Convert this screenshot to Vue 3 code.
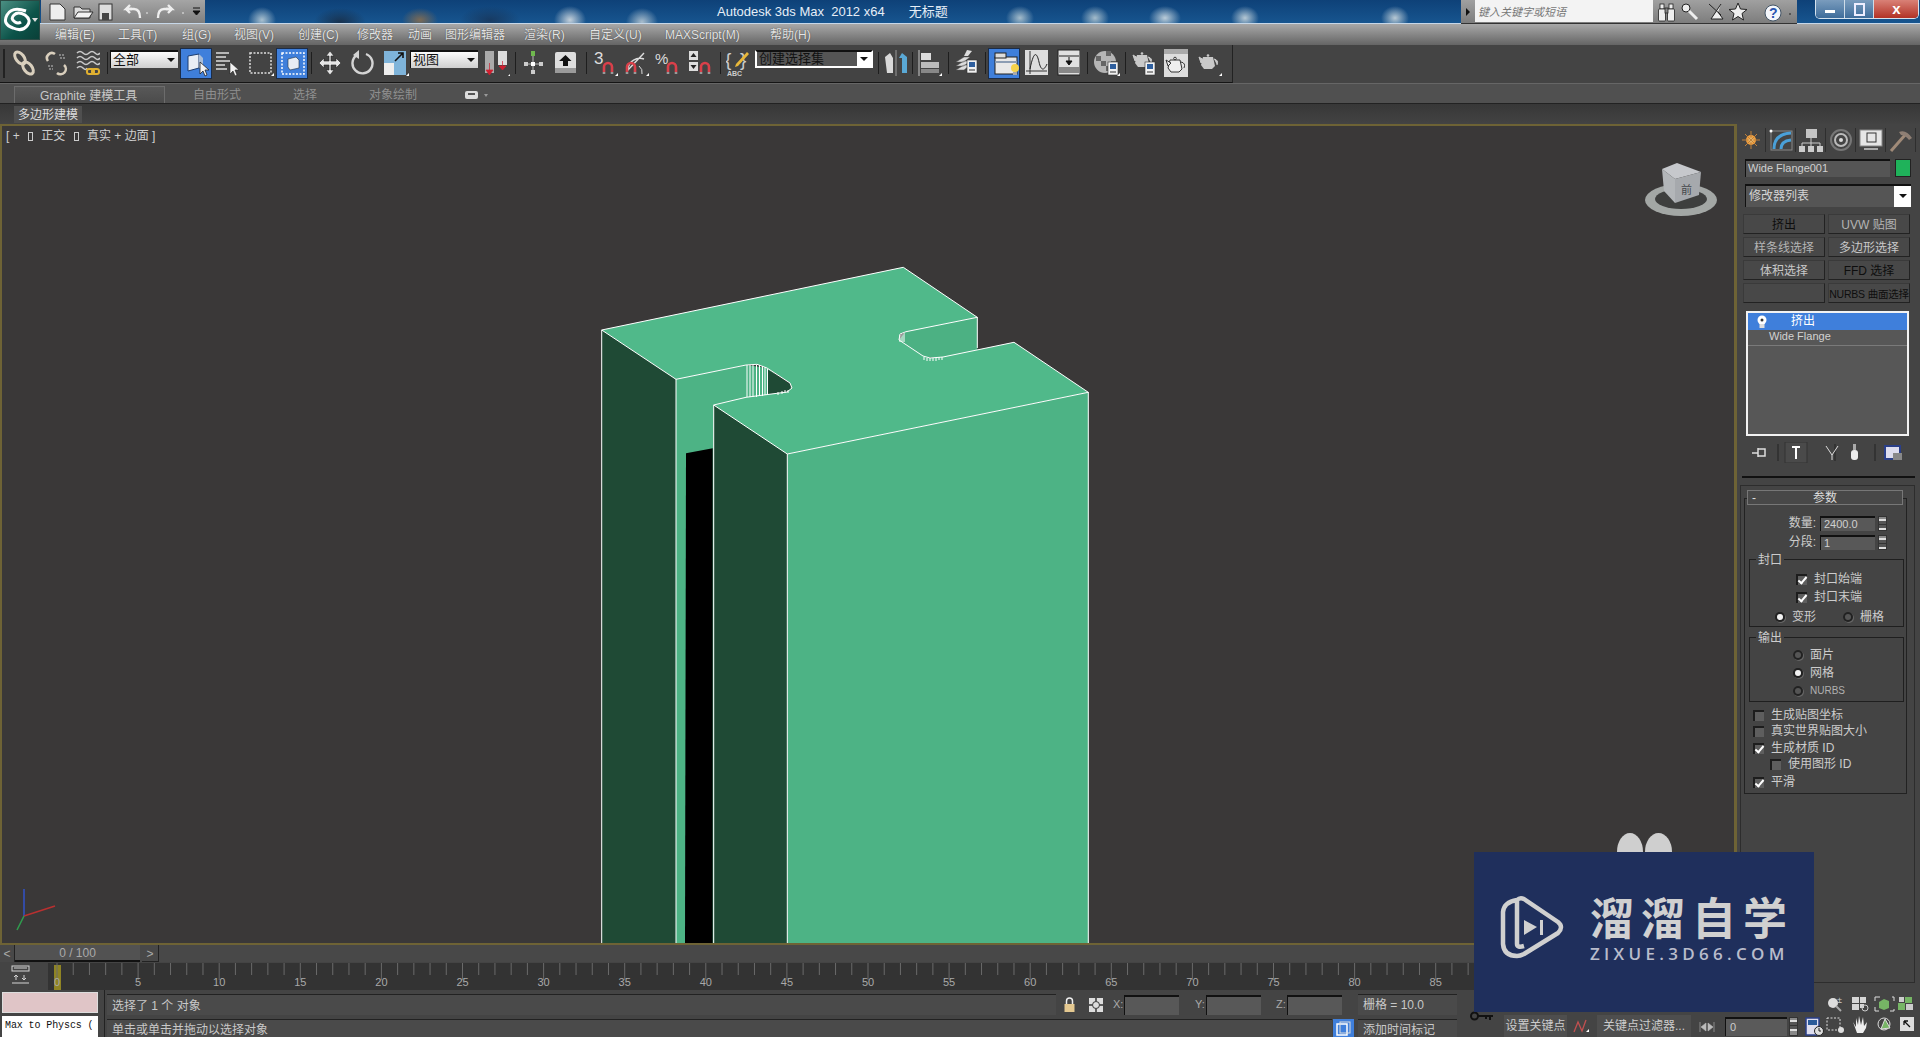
<script setup>
const fly = (x = 22, y = 25) => `<path d="M${x} ${y + 3}l3-3v3z" fill="#fff"/>`
const magnet = (x, y) => `<path d="M${x} ${y + 9}v-5a4 4 0 0 1 8 0v5" fill="none" stroke="#d9404a" stroke-width="2.6"/><path d="M${x - 1.3} ${y + 9}h2.6v2h-2.6zM${x + 6.7} ${y + 9}h2.6v2h-2.6z" fill="#9a9a9a"/>`
const mini = (x, y) => `<rect x="${x}" y="${y}" width="10" height="13" fill="#f2f2f2" stroke="#333" stroke-width=".6"/><rect x="${x + 2}" y="${y + 2}" width="6" height="5" fill="#2f5f9e"/><path d="M${x + 2} ${y + 10}h6" stroke="#333"/>`
const teapot = (x, y, c = '#c9c9c9') => `<path d="M${x + 4} ${y + 3}h10l2 9-3 3h-8l-3-4z" fill="${c}"/><path d="M${x + 5} ${y + 6}l-5-3 2 6zM${x + 15} ${y + 5}q5 1 3 6" fill="${c}" stroke="${c}"/><circle cx="${x + 9}" cy="${y + 1.5}" r="1.3" fill="${c}"/>`

const ic = {
  link: `<g fill="none" stroke="#d9cfbd" stroke-width="3"><ellipse cx="8" cy="9" rx="4" ry="7" transform="rotate(-38 8 9)"/><ellipse cx="16" cy="19" rx="4" ry="7" transform="rotate(-38 16 19)"/></g>`,
  unlink: `<g fill="none" stroke="#d9cfbd" stroke-width="2.6"><path d="M4 12a5 5 0 0 1 7-7"/><path d="M20 16a5 5 0 0 1-7 8"/></g><path d="M15 6h5M16 9h5M4 17h5M5 20h4" stroke="#999" stroke-width="1.6" stroke-dasharray="2 1"/>`,
  bind: `<g fill="none" stroke="#c9c9c9" stroke-width="1.6"><path d="M1 4q3-3 6 0t6 0 6 0 5 0M1 9q3-3 6 0t6 0 6 0 5 0M1 14q3-3 6 0t6 0 6 0 5 0M1 19q3-3 6 0t4 0"/></g><g fill="none" stroke="#e0b030" stroke-width="2"><rect x="11" y="20" width="7" height="5" rx="2"/><rect x="16" y="20" width="7" height="5" rx="2"/></g>`,
  sel: `<path d="M5 7l11-2v14l-11 3z" fill="#e9eef5" stroke="#1c3d70"/><path d="M16 5l4 4v10h-4z" fill="#a9bdd8"/><path d="M17 13v12l3-3 2 5 2-1-2-5h4z" fill="#f4f4f4" stroke="#222" stroke-width=".8"/>`,
  byname: `<path d="M1 4h13M1 8h10M1 12h14M1 16h9M1 20h11" stroke="#ddd" stroke-width="1.6"/><path d="M15 13v12l3-3 2 5 2-1-2-5h4z" fill="#f2f2f2" stroke="#222" stroke-width=".6"/>`,
  rect: `<rect x="2" y="4" width="21" height="20" fill="none" stroke="#e0e0e0" stroke-width="1.5" stroke-dasharray="2 1.5"/>${fly(23, 24)}`,
  win: `<rect x="3" y="4" width="22" height="21" fill="none" stroke="#fff" stroke-width="1.5" stroke-dasharray="2 1.5"/><path d="M9 10l8-2 3 3v8l-9 2-2-3z" fill="#e8edf4" stroke="#234" stroke-width=".6"/>`,
  move: `<path d="M12 2l4 5h-3v5h5v-3l5 5-5 5v-3h-5v5h3l-4 5-4-5h3v-5H6v3l-5-5 5-5v3h5V7H8z" fill="#e6e6e6" stroke="#222" stroke-width=".6"/>`,
  rotate: `<path d="M7 6a10 10 0 1 0 9-1" fill="none" stroke="#d4d4d4" stroke-width="2.4"/><path d="M9 1v9l-6-4z" fill="#d4d4d4"/>`,
  scale: `<rect x="1" y="2" width="22" height="24" fill="#7fb4da"/><rect x="1" y="14" width="10" height="12" fill="#eee"/><path d="M12 12l8-8M15 4h5v5" fill="none" stroke="#111" stroke-width="1.6"/>${fly(23, 24)}`,
  pivot: `<rect x="1" y="2" width="9" height="22" fill="#aaa"/><rect x="14" y="2" width="9" height="14" fill="#ddd"/><path d="M5.500 14v11M2 21l3.500 5 3.500-5zM18.500 12v8M15 17l3.500 4 3.500-4z" fill="#d02030" stroke="#d02030" stroke-width=".7"/>${fly(24, 24)}`,
  manip: `<path d="M11 6v18M2 15h19" stroke="#bbb"/><rect x="9" y="2" width="4" height="5" fill="#6fb84e"/><rect x="2" y="13" width="4" height="4" fill="#ccc"/><rect x="17" y="13" width="4" height="4" fill="#ccc"/><rect x="9" y="21" width="4" height="4" fill="#ccc"/><rect x="9" y="13" width="4" height="4" fill="#fff"/>`,
  key: `<rect x="1" y="3" width="21" height="21" rx="2" fill="#dedede"/><rect x="1" y="19" width="21" height="5" fill="#9a9a9a"/><path d="M11.500 6l6 6h-3.500v5h-5v-5H5z" fill="#111"/>`,
  snap3: `<text x="1" y="15" font-size="17" fill="#ddd" font-family="Liberation Sans">3</text>${magnet(11, 14)}${fly(22, 24)}`,
  snapa: `<path d="M4 20A12 12 0 0 1 20 10M3 22L20 4" fill="none" stroke="#ddd" stroke-width="1.4"/>${magnet(3, 14)}<path d="M15 17a8 8 0 0 1 3 8" fill="none" stroke="#ddd"/>${fly(22, 24)}`,
  snapp: `<text x="0" y="15" font-size="15" fill="#ddd" font-family="Liberation Sans">%</text>${magnet(13, 14)}`,
  snaps: `<rect x="1" y="2" width="9" height="9" fill="#ddd"/><rect x="1" y="13" width="9" height="9" fill="#ddd"/><path d="M5.500 4l3 4h-6zM5.500 20l3-4h-6z" fill="#222"/>${magnet(13, 14)}`,
  sets: `<text x="-1" y="17" font-size="19" fill="#ccc" font-family="Liberation Sans">{</text><text x="14" y="17" font-size="19" fill="#ccc" font-family="Liberation Sans">}</text><path d="M10 15L21 3l2 2-11 12-3 1z" fill="#e9b83a"/><text x="1" y="27" font-size="7" font-weight="700" fill="#ccc" font-family="Liberation Sans">ABC</text>`,
  mirror: `<path d="M1 8l5-4 3 5v15H3z" fill="#d9d9d9"/><path d="M12 1v26" stroke="#999"/><path d="M23 8l-5-4-3 5h3v15h5z" fill="#5aa9d6"/>`,
  align: `<path d="M1 1v26" stroke="#ccc"/><rect x="3" y="4" width="10" height="7" fill="#ddd"/><rect x="3" y="13" width="18" height="6" fill="#bbb"/><rect x="3" y="20" width="18" height="4" fill="#888"/>${fly(21, 24)}`,
  layers: `<path d="M2 13l8-5h6l-6 5zM2 17l8-5h6l-6 5zM2 21l8-5h6l-6 5z" fill="#ddd" stroke="#555" stroke-width=".5"/><path d="M13 1l5 1-4 5h-4z" fill="#ddd"/>${mini(13, 11)}`,
  graph: `<rect x="4" y="8" width="22" height="17" fill="#e8e8e8" stroke="#222"/><rect x="4" y="4" width="11" height="5" fill="#ddd" stroke="#222"/><rect x="4" y="12" width="22" height="2" fill="#8c9db3"/><circle cx="24" cy="19" r="4" fill="#f5d24a"/><rect x="22" y="23" width="4" height="3" fill="#aaa"/>`,
  curve: `<rect x="1" y="1" width="23" height="25" fill="#ddd"/><path d="M6 2v23M2 22h21" stroke="#333"/><path d="M6 20C10 0 13 4 15 13s5 9 8 2" fill="none" stroke="#222"/>`,
  schem: `<rect x="1" y="1" width="22" height="25" fill="#e0e0e0" stroke="#222"/><path d="M2 7h20" stroke="#222"/><rect x="2" y="18" width="20" height="6" fill="#888"/><path d="M12 8v7M9 12l3 4 3-4z" stroke="#111" fill="#111"/>`,
  mat: `<circle cx="11" cy="13" r="11" fill="#b5b5b5"/><path d="M2 7h5v5H2zM12 2h5v5h-5zM7 12h5v5H7zM17 12h5v5h-5zM12 17h5v5h-5z" fill="#666"/>${mini(14, 13)}${fly(23, 24)}`,
  rset: `${teapot(1, 3)}${mini(13, 13)}`,
  rfr: `<rect x="0" y="0" width="24" height="28" fill="#ddd"/><rect x="0" y="0" width="24" height="5" fill="#aaa"/>${teapot(2, 8, '#eee').replace(/fill="#eee"/g, 'fill="#eee" stroke="#333"')}`,
  rend: `${teapot(2, 5)}${fly(22, 24)}`,
  sun: `<circle cx="13" cy="12" r="5" fill="#f0a040"/><circle cx="13" cy="12" r="2.500" fill="#ffe9a0"/><path d="M13 3v18M4 12h18M7 6l12 12M19 6L7 18" stroke="#c0803a" stroke-width="1"/>`,
  bend: `<rect x="3" y="3" width="21" height="19" fill="none" stroke="#888"/><path d="M6 21q0-15 17-16M13 21q0-8 10-9" fill="none" stroke="#4aa0d8" stroke-width="3"/><circle cx="3" cy="3" r="1.500" fill="#fff"/>`,
  hier: `<rect x="8" y="1" width="11" height="9" fill="#c4c4c4"/><path d="M13 10v5M4 15h18M4 15v3M13 15v3M22 15v3" stroke="#ccc"/><rect x="1" y="18" width="6" height="6" fill="#ccc"/><rect x="10" y="18" width="6" height="6" fill="#ccc"/><rect x="19" y="18" width="6" height="6" fill="#ccc"/>`,
  motion: `<circle cx="13" cy="12" r="10" fill="none" stroke="#777" stroke-width="2"/><circle cx="13" cy="12" r="6" fill="none" stroke="#bbb" stroke-width="2"/><circle cx="13" cy="12" r="2" fill="#ddd"/>`,
  display: `<rect x="2" y="2" width="22" height="16" fill="#e6e6e6" stroke="#888"/><rect x="9" y="5" width="9" height="9" fill="none" stroke="#333"/><path d="M6 21h14" stroke="#aaa" stroke-width="2"/>`,
  hammer: `<path d="M3 23L17 7" stroke="#a08a78" stroke-width="3"/><path d="M11 4q7-3 13 6l-3 2q-4-5-8-5z" fill="#8f7f74"/>`
}

let cursor = 0
const tb = [
  { x: 12, w: 24, s: ic.link }, { x: 44, w: 24, s: ic.unlink }, { x: 76, w: 24, s: ic.bind }, { x: 107, sep: 1 },
  { x: 110, w: 68, sel: '全部' }, { x: 181, w: 30, s: ic.sel, on: 1 }, { x: 215, w: 26, s: ic.byname }, { x: 248, w: 26, s: ic.rect },
  { x: 277, w: 30, s: ic.win, on: 1 }, { x: 311, sep: 1 }, { x: 318, w: 24, s: ic.move }, { x: 350, w: 24, s: ic.rotate },
  { x: 383, w: 26, s: ic.scale }, { x: 410, w: 68, sel: '视图' }, { x: 484, w: 26, s: ic.pivot }, { x: 515, sep: 1 },
  { x: 522, w: 23, s: ic.manip }, { x: 554, w: 23, s: ic.key }, { x: 586, sep: 1 }, { x: 593, w: 25, s: ic.snap3 },
  { x: 624, w: 25, s: ic.snapa }, { x: 655, w: 25, s: ic.snapp }, { x: 688, w: 24, s: ic.snaps }, { x: 720, sep: 1 },
  { x: 726, w: 24, s: ic.sets }, { x: 755, w: 118, sel: '创建选择集', dark: 1 }, { x: 878, sep: 1 }, { x: 884, w: 24, s: ic.mirror },
  { x: 912, sep: 1 }, { x: 918, w: 24, s: ic.align }, { x: 948, sep: 1 }, { x: 954, w: 24, s: ic.layers }, { x: 985, sep: 1 },
  { x: 989, w: 30, s: ic.graph, on: 1 }, { x: 1024, w: 24, s: ic.curve }, { x: 1057, w: 23, s: ic.schem }, { x: 1087, sep: 1 },
  { x: 1094, w: 26, s: ic.mat }, { x: 1125, sep: 1 }, { x: 1132, w: 24, s: ic.rset }, { x: 1164, w: 24, s: ic.rfr }, { x: 1197, w: 25, s: ic.rend }
].map((it) => {
  const m = it.x - cursor
  cursor = it.x + (it.sep ? 1 : it.w)
  return { ...it, ml: m }
})

const menus = [
  ['编辑(E)', 'E', 55], ['工具(T)', 'T', 118], ['组(G)', 'G', 182], ['视图(V)', 'V', 234], ['创建(C)', 'C', 298], ['修改器', '', 357], ['动画', '', 408],
  ['图形编辑器', '', 445], ['渲染(R)', 'R', 524], ['自定义(U)', 'U', 589], ['MAXScript(M)', 'M', 665], ['帮助(H)', 'H', 770]
].map((m, i, a) => ({ label: m[0], w: (i < a.length - 1 ? a[i + 1][2] : m[2] + 50) - m[2] }))

const tabs = [ic.sun, ic.bend, ic.hier, ic.motion, ic.display, ic.hammer]
const mods = [
  { t: '挤出', c: 'dim' }, { t: 'UVW 贴图', c: 'mid' }, { t: '样条线选择', c: 'mid' }, { t: '多边形选择', c: '' },
  { t: '体积选择', c: '' }, { t: 'FFD 选择', c: 'dim' }, { t: '', c: '' }, { t: 'NURBS 曲面选择', c: 'dim tight' }
]
const ticks = Array.from({ length: 88 }, (_, i) => ({ x: 57 + i * 16.22, i }))
</script>

<template>
  <div class="app">
    <header class="title">
      <div class="quick">
        <svg class="qi" width="160" height="24" viewBox="0 0 160 24">
          <path d="M9 4h10l5 5v11H9z" fill="#eee" stroke="#333"/>
          <path d="M33 7h6l2 2h8v9H33z" fill="#ddd" stroke="#333"/><path d="M33 18l4-6h15l-4 6z" fill="#f2f2f2" stroke="#333"/>
          <rect x="58" y="4" width="13" height="16" fill="#ddd" stroke="#333"/><rect x="61" y="13" width="7" height="7" fill="#444"/>
          <path d="M91 9h-6l4-4M85 9l4 4" fill="none" stroke="#eee" stroke-width="2.400"/><path d="M85 9h8q6 0 6 9" fill="none" stroke="#eee" stroke-width="2.400"/>
          <circle cx="106" cy="13" r="1" fill="#ccc"/>
          <path d="M125 9h6l-4-4M131 9l-4 4" fill="none" stroke="#eee" stroke-width="2.400"/><path d="M131 9h-8q-6 0-6 9" fill="none" stroke="#eee" stroke-width="2.400"/>
          <circle cx="142" cy="13" r="1" fill="#ccc"/>
          <path d="M152 8h7M152 11h7l-3.500 4z" stroke="#111" fill="#111"/>
        </svg>
      </div>
      <div class="caption"><span>Autodesk 3ds Max&nbsp; 2012 x64</span><span class="cap-doc">无标题</span></div>
      <div class="info">
        <span class="info-arrow"></span>
        <span class="search">键入关键字或短语</span>
        <svg width="144" height="24" viewBox="1653 0 144 24">
          <g fill="#eee" stroke="#222" stroke-width=".8"><rect x="1660" y="4" width="4" height="5"/><rect x="1669" y="4" width="4" height="5"/><rect x="1658.500" y="9" width="7" height="12" rx="1"/><rect x="1667.500" y="9" width="7" height="12" rx="1"/><rect x="1665" y="8" width="3" height="5" fill="#888"/></g>
          <circle cx="1686" cy="8" r="4" fill="#eee" stroke="#222"/><path d="M1689 11l8 8" stroke="#eee" stroke-width="3"/>
          <path d="M1709 4l12 11M1721 4l-10 15h12l-5-7" fill="#eee" stroke="#222"/>
          <path d="M1738 3l2.500 6 6.500.5-5 4 1.500 6.500-5.500-3.500-5.500 3.500 1.500-6.500-5-4 6.500-.5z" fill="#eee" stroke="#222"/>
          <circle cx="1773" cy="13" r="8" fill="#f4f6fb" stroke="#456"/><text x="1769" y="18" font-size="14" font-weight="700" fill="#2a55b0" font-family="Liberation Sans">?</text>
          <circle cx="1790" cy="14" r="1" fill="#444"/>
        </svg>
      </div>
      <div class="winbtns">
        <span class="wb"><i class="w-min"></i></span><span class="wb"><i class="w-max"></i></span><span class="wb close">x</span>
      </div>
    </header>
    <div class="logo">
      <svg width="30" height="30" viewBox="0 0 30 30"><path d="M24 6Q10 1 5 10t6 13q9 4 14-2t-2-11q-7-4-11 0t1 7q3 2 6 0" fill="none" stroke="#fff" stroke-width="3"/></svg>
      <i class="logo-arrow"></i>
    </div>

    <nav class="menu">
      <span v-for="m in menus" :key="m.label" class="menu-item" :style="{ width: m.w + 'px' }">{{ m.label }}</span>
    </nav>

    <div class="toolbar">
      <i class="grip"></i>
      <template v-for="(it, i) in tb" :key="i">
        <i v-if="it.sep" class="tsep" :style="{ marginLeft: it.ml + 'px' }"></i>
        <span v-else-if="it.sel" class="dd" :class="{ dark: it.dark }" :style="{ marginLeft: it.ml + 'px', width: it.w + 'px' }">
          <b class="dd-text">{{ it.sel }}</b><i class="dd-arrow"></i>
        </span>
        <span v-else class="tbtn" :class="{ on: it.on }" :style="{ marginLeft: it.ml + 'px', width: it.w + 'px' }">
          <svg :width="it.w" height="28" :viewBox="`${it.on ? -2 : 0} 0 ${it.w} 28`" v-html="it.s"></svg>
        </span>
      </template>
    </div>

    <div class="rib-tabs">
      <span class="rib-active">Graphite 建模工具</span>
      <span class="rib-t t1">自由形式</span><span class="rib-t t2">选择</span><span class="rib-t t3">对象绘制</span>
      <svg class="rib-ic" width="24" height="10" viewBox="0 0 24 10"><rect x="0" y="1" width="13" height="8" rx="2" fill="#ddd"/><rect x="3" y="3" width="7" height="2" fill="#555"/><path d="M19 4h4l-2 3z" fill="#999"/></svg>
    </div>
    <div class="rib-panel"><span class="rib-chip">多边形建模</span></div>

    <main class="work">
      <div class="left">
        <section class="viewport">
          <div class="vp-label">[ + <i class="box"></i> 正交 <i class="box"></i> 真实 + 边面 ]</div>
          <svg class="scene" width="1738" height="821" viewBox="0 124 1738 821">
            <polygon points="676,379 746,365 746,398 714,405 714,945 676,945" fill="#4db385"/>
            <polygon points="686,453.300 712.700,448.300 712.700,945 685,945" fill="#000"/>
            <polygon points="601.700,330 676,379.300 676,945 601.700,945" fill="#1f4a35"/>
            <polygon points="713.700,405 787.300,454 787.300,945 713.700,945" fill="#1f4a35"/>
            <polygon points="787.300,454 1088.300,392.300 1088.300,945 787.300,945" fill="#4db385"/>
            <polygon points="906,331 977.300,317.300 977.300,350 943,358 923,357 899,340" fill="#4cb183"/>
            <polygon points="746,365 767,368 792,388 787,393 746,398" fill="#4db385"/>
            <polygon points="767,369 790,384 791,389 787,392 767,395" fill="#1f4a35"/>
            <polygon points="601.700,330 903.300,267.300 977.300,317.300 906,331.700 900,334 899,340 923,356 930,358 943,357 1014,342.300 1088.300,392.300 787.300,454 713.700,405 746,397.300 787,392 792,388 790,383 767,368 757,364.300 746,365 676,379.300" fill="#50b98a" stroke="#fff" stroke-width="1" stroke-linejoin="round"/>
            <g stroke="#fff" stroke-width="1">
              <path d="M601.700 330V945M676 379V945M713.700 405V945M787.300 454V945M1088.300 392V945M977.300 317V348"/>
              <path d="M747 365v32M750 365v32M753 365v32M756.500 365v32M759.500 365v31M762.500 366v30M765 367v28M767.500 369v26"/>
              <path d="M778 392v3M782 391v3M785 390v3M788 390v3"/>
              <path d="M900 335v7M902 334v8M904 333v9M924 357v3M927 358v3M930 358v3M933 358v3M936 358v3M939 357v3M942 357v3"/>
            </g>
            <g class="cube">
              <ellipse cx="1681" cy="200" rx="36" ry="16" fill="#a3a7a5"/>
              <ellipse cx="1681" cy="199" rx="26" ry="10" fill="#3e3f3e"/>
              <polygon points="1662,169 1677,163 1701,172 1675,179" fill="#c6c8cc"/>
              <polygon points="1675,179 1701,172 1699,195 1675,203" fill="#a6a9ad"/>
              <polygon points="1662,169 1675,179 1675,203 1664,191" fill="#b3b6b9"/>
              <text x="1681" y="194" font-size="11" fill="#45484c" font-family="Noto Sans CJK SC">前</text>
            </g>
            <g stroke-width="1.500">
              <path d="M24 916V889" stroke="#3252c8"/><path d="M24 916L55 906" stroke="#b83030"/><path d="M24 916L17 930" stroke="#2f9c4e"/>
            </g>
          </svg>
        </section>
        <div class="slider">
          <span class="sl-btn">&lt;</span><span class="sl-track">0 / 100</span><span class="sl-btn end">&gt;</span>
        </div>
        <div class="ruler">
          <svg width="1738" height="28" viewBox="0 0 1738 28">
            <rect x="48" y="1" width="1690" height="27" fill="#333"/>
            <g transform="translate(11 4)" fill="none" stroke="#d4d4d4"><rect x="1" y="0" width="17" height="5"/><path d="M3 2h13M5 9v5M3 11l2-2 2 2M13 9v5M11 12l2 2 2-2M1 17h17" /></g>
            <rect x="54" y="3" width="7" height="25" fill="#8f8424"/>
            <g v-for="t in ticks" :key="t.i">
              <line :x1="t.x" y1="1" :x2="t.x" :y2="t.i % 5 === 0 ? 18 : 13" stroke="#6a6a6a" stroke-width="1"/>
              <text v-if="t.i % 5 === 0" :x="t.x" y="24" text-anchor="middle" font-size="11" fill="#a9a9a9" font-family="Liberation Sans">{{ t.i }}</text>
            </g>
          </svg>
        </div>
      </div>

      <aside class="cmd">
        <div class="cmd-tabs">
          <span v-for="(t, i) in tabs" :key="i" class="cmd-tab"><svg width="26" height="24" viewBox="0 0 26 24" v-html="t"></svg></span>
        </div>
        <div class="name-row"><span class="name">Wide Flange001</span><i class="swatch"></i></div>
        <div class="modlist"><span class="modlist-t">修改器列表</span><i class="modlist-btn"></i></div>
        <div class="modgrid"><span v-for="(m, i) in mods" :key="i" class="modbtn" :class="m.c">{{ m.t }}</span></div>
        <div class="stack">
          <div class="stack-on">
            <svg width="12" height="14" viewBox="0 0 12 14"><circle cx="6" cy="5" r="4.500" fill="#fff"/><rect x="3.500" y="9" width="5" height="4" fill="#ddd"/><circle cx="6" cy="5" r="1.500" fill="#333"/></svg>
            <span>挤出</span>
          </div>
          <div class="stack-base">Wide Flange</div>
        </div>
        <div class="stack-tools">
          <svg width="164" height="21" viewBox="1750 442 164 21">
            <path d="M1752 453h6M1758 448v9M1758 449h7v7h-7" fill="none" stroke="#ddd" stroke-width="1.500"/>
            <path d="M1778 444v17M1875 444v17M1835 444v17" stroke="#222"/>
            <rect x="1785" y="442" width="22" height="21" fill="#4a4a4a" stroke="#333"/><path d="M1792 446h8v2h-3v11h-2v-11h-3z" fill="#fff"/>
            <path d="M1826 446l6 9 6-9M1832 455v5" fill="none" stroke="#ddd"/>
            <rect x="1851" y="450" width="7" height="10" rx="3" fill="#eee"/><path d="M1853 444h3v6h-3z" fill="#aaa"/>
            <rect x="1885" y="446" width="15" height="13" fill="#dde" stroke="#2a3f88" stroke-width="2"/><rect x="1893" y="453" width="9" height="7" fill="#888"/>
          </svg>
        </div>
        <i class="cmd-line"></i>
        <div class="rollbox">
          <div class="rollout">
            <div class="roll-head"><span class="roll-minus">-</span><span class="roll-title">参数</span></div>
            <div class="spin-row"><span class="spin-l">数量:</span><span class="spin-in">2400.0</span><i class="spin-b"></i></div>
            <div class="spin-row s2"><span class="spin-l">分段:</span><span class="spin-in">1</span><i class="spin-b"></i></div>

            <div class="group g1">
              <span class="legend">封口</span>
              <label class="chk c1"><i class="cb on"></i>封口始端</label>
              <label class="chk c2"><i class="cb on"></i>封口末端</label>
              <div class="radios">
                <label class="rad r1"><i class="rb on"></i>变形</label>
                <label class="rad r2"><i class="rb"></i>栅格</label>
              </div>
            </div>

            <div class="group g2">
              <span class="legend">输出</span>
              <label class="rad r3"><i class="rb"></i>面片</label>
              <label class="rad r3"><i class="rb on"></i>网格</label>
              <label class="rad r3 small"><i class="rb"></i>NURBS</label>
            </div>

            <div class="opts">
              <label class="chk o"><i class="cb"></i>生成贴图坐标</label>
              <label class="chk o"><i class="cb"></i>真实世界贴图大小</label>
              <label class="chk o tall"><i class="cb on"></i>生成材质 ID</label>
              <label class="chk o sub"><i class="cb"></i>使用图形 ID</label>
              <label class="chk o tall last"><i class="cb on"></i>平滑</label>
            </div>
          </div>
        </div>
      </aside>
    </main>

    <footer class="status">
      <div class="script"><i class="pink"></i><span class="mxs">Max to Physcs (</span></div>
      <div class="st-mid">
        <div class="st-row">
          <span class="st-box wide">选择了 1 个 对象</span>
          <svg class="lock" width="11" height="15" viewBox="0 0 11 15"><path d="M2.500 7V4a3 3 0 0 1 6 0v3" fill="none" stroke="#eee" stroke-width="1.500"/><rect x="0.500" y="7" width="10" height="8" fill="#e4c890"/></svg>
          <svg class="cross" width="14" height="14" viewBox="0 0 14 14"><rect width="14" height="14" fill="#ddd"/><circle cx="7" cy="7" r="3.500" fill="none" stroke="#333"/><path d="M7 0v3M7 11v3M0 7h3M11 7h3" stroke="#333" stroke-width="1.500"/></svg>
          <span class="xyz x">X:</span><i class="xyz-in"></i>
          <span class="xyz y">Y:</span><i class="xyz-in"></i>
          <span class="xyz z">Z:</span><i class="xyz-in"></i>
          <span class="st-box grid">栅格 = 10.0</span>
        </div>
        <div class="st-row two">
          <span class="st-box prompt">单击或单击并拖动以选择对象</span>
          <span class="blue-ic"><svg width="15" height="15" viewBox="0 0 15 15"><rect x="1" y="3" width="10" height="11" fill="none" stroke="#fff" stroke-width="1.500"/><rect x="4" y="1" width="10" height="11" fill="none" stroke="#ddd"/></svg></span>
          <span class="st-box time">添加时间标记</span>
        </div>
      </div>
      <div class="st-key"><svg width="24" height="10" viewBox="0 0 24 10"><circle cx="4.500" cy="5" r="3.500" fill="none" stroke="#111" stroke-width="2"/><path d="M8 4h15v2h-2v3h-2V6h-2v2h-2V6H8z" fill="#111"/></svg></div>
      <div class="st-anim">
        <i class="anim-white"></i>
        <div class="anim-row">
          <span class="anim-btn setkey">设置关键点</span>
          <svg class="curve-ic" width="17" height="16" viewBox="0 0 17 16"><path d="M1 14l4-10 4 9 4-11" fill="none" stroke="#c05050" stroke-width="1.300"/><path d="M13 14l3-3v3z" fill="#fff"/></svg>
          <span class="anim-btn filter">关键点过滤器...</span>
        </div>
      </div>
      <div class="st-play">
        <svg class="goto" width="16" height="10" viewBox="0 0 16 10"><path d="M1 0v10M15 0v10M7 1v8L2 5zM9 1v8l5-4z" fill="#bbb" stroke="#bbb" stroke-width=".6"/></svg>
        <span class="frame">0</span><i class="spin-b big"></i>
        <svg class="tc" width="19" height="19" viewBox="0 0 19 19"><rect x="1" y="1" width="13" height="17" fill="#dde" stroke="#2a3f88" stroke-width="1.500"/><rect x="3" y="3" width="9" height="5" fill="#2a5a9a"/><circle cx="14" cy="14" r="4.500" fill="#ddd" stroke="#222"/><path d="M14 11v3h2" stroke="#222" fill="none"/></svg>
      </div>
      <div class="st-nav">
        <svg width="92" height="41" viewBox="0 0 92 41">
          <circle cx="7" cy="7" r="5" fill="#ddd"/><path d="M10 10l5 5" stroke="#aaa" stroke-width="2"/><text x="11" y="7" font-size="9" fill="#ccc" font-family="Liberation Sans">±</text>
          <path d="M26 1h7v6h-7zM34 1h6v6h-6zM26 8h7v6h-7zM34 8h4v4h-4z" fill="#d6d6d6"/><circle cx="39" cy="12" r="3" fill="none" stroke="#ccc"/>
          <path d="M49 5V1h5M66 1h2v4M68 13v2h-4M49 11v4h4" fill="none" stroke="#ddd"/><path d="M53 6l5-3 5 2v7l-5 2-5-2z" fill="#76b565"/>
          <path d="M72 7h7v7h-7zM79 1h7v6h-7z" fill="#76b565"/><path d="M80 8h7v6h-7zM73 1h5v5h-5z" fill="#ccc"/>
          <rect x="1" y="22" width="13" height="12" fill="none" stroke="#ddd" stroke-dasharray="2 1.500"/><circle cx="15" cy="34" r="3" fill="#ddd"/>
          <path d="M27 26l3 5v-9l2 7 1-9 2 9 2-8 1 9 3-4-1 6-3 5h-6z" fill="#eee"/>
          <circle cx="58" cy="28" r="6" fill="none" stroke="#ddd"/><path d="M55 33l4-10 5 9z" fill="#76b565" stroke="#ddd"/>
          <rect x="74" y="21" width="14" height="14" fill="#ddd"/><path d="M78 25l6 6M78 25h4M78 25v4" stroke="#111" stroke-width="1.300"/>
        </svg>
      </div>
    </footer>

    <aside class="mark">
      <i class="ear e1"></i><i class="ear e2"></i>
      <svg width="66" height="68" viewBox="0 0 66 68"><path d="M17 6Q4 8 3 18V50Q4 62 17 62Q20 62 24 60L58 39Q64 33 58 28L24 5Q20 3 17 6V50Q17 54 24 52" fill="none" stroke="#d0d0d0" stroke-width="4.500" stroke-linejoin="round"/><path d="M24 26l13 7-13 8z" fill="#d0d0d0"/><rect x="40" y="26" width="3" height="15" fill="#d0d0d0"/></svg>
      <div class="mark-t"><b>溜溜自学</b><span>ZIXUE.3D66.COM</span></div>
    </aside>
  </div>
</template>

<style>
html, body { margin: 0; background: #444; overflow: hidden; }
</style>

<style scoped>
.app {
  position: relative;
  width: 1920px;
  height: 1037px;
  overflow: hidden;
  background: #444;
  color: #ccc;
  font: 12px/1.2 "Liberation Sans", "Noto Sans CJK SC", sans-serif;
}
i { display: block; font-style: normal; }

/* title */
.title {
  height: 24px;
  display: flex;
  box-sizing: border-box;
  border-bottom: 1px solid #c6d7e8;
  background:
    radial-gradient(ellipse 14px 13px at 262px 20px, #a9c0cf 0, transparent 100%),
    radial-gradient(ellipse 26px 14px at 340px 22px, #18324f 0, transparent 100%),
    radial-gradient(ellipse 18px 12px at 420px 20px, #7b6a55 0, transparent 100%),
    radial-gradient(ellipse 30px 14px at 490px 20px, #173a62 0, transparent 100%),
    radial-gradient(ellipse 16px 14px at 570px 20px, #c4d0da 0, transparent 100%),
    radial-gradient(ellipse 16px 14px at 642px 22px, #a9bdcc 0, transparent 100%),
    radial-gradient(ellipse 14px 12px at 1020px 18px, #a4bccb 0, transparent 100%),
    radial-gradient(ellipse 14px 12px at 1095px 18px, #a4bccb 0, transparent 100%),
    radial-gradient(ellipse 16px 12px at 1165px 18px, #bccdd9 0, transparent 100%),
    radial-gradient(ellipse 14px 12px at 1245px 18px, #b6c8d4 0, transparent 100%),
    radial-gradient(ellipse 14px 12px at 1395px 18px, #b8c9d4 0, transparent 100%),
    linear-gradient(#0e4178, #17558f);
}
.quick {
  width: 164px;
  margin-left: 41px;
  height: 23px;
  background: linear-gradient(#a5a5a5, #7f7f7f);
}
.qi { display: block; }
.caption {
  width: 1256px;
  padding-left: 512px;
  box-sizing: border-box;
  display: flex;
  align-items: center;
  color: #e6eef7;
  font-size: 13px;
  height: 23px;
}
.cap-doc { margin-left: 24px; }
.info {
  width: 336px;
  height: 24px;
  display: flex;
  background: linear-gradient(#a0a0a0, #7d7d7d);
  box-sizing: border-box;
  border-bottom: 1px solid #333;
}
.info-arrow {
  width: 14px;
  position: relative;
  flex: none;
}
.info-arrow::after {
  content: "";
  display: block;
  margin: 8px 0 0 5px;
  border-left: 4px solid #111;
  border-top: 4px solid transparent;
  border-bottom: 4px solid transparent;
  width: 0;
}
.search {
  width: 178px;
  height: 22px;
  box-sizing: border-box;
  background: #f3f3f3;
  color: #777;
  font-size: 11px;
  font-style: italic;
  line-height: 24px;
  padding-left: 3px;
  flex: none;
}
.winbtns {
  display: flex;
  margin-left: 18px;
  height: 18px;
  border: 1px solid #d5e2ee;
  border-top: 0;
  border-radius: 0 0 5px 5px;
  overflow: hidden;
  width: 102px;
  flex: none;
}
.wb {
  width: 28px;
  background: linear-gradient(#7a9cbd, #3f6d9b);
  border-right: 1px solid #cfdce8;
  position: relative;
  flex: none;
  display: flex;
  align-items: center;
  justify-content: center;
}
.w-min { width: 10px; height: 3px; background: #fff; margin-top: 4px; }
.w-max { width: 7px; height: 9px; border: 2px solid #eef; }
.wb.close {
  width: 45px;
  border: 0;
  background: linear-gradient(#d98177, #b23226);
  color: #fff;
  font-weight: 700;
  font-size: 15px;
  line-height: 14px;
}
.logo {
  position: absolute;
  left: 0;
  top: 0;
  width: 40px;
  height: 40px;
  background: linear-gradient(135deg, #4b8f83, #0c5349 60%, #0a4038);
  border: 1px solid #2a4a44;
  box-sizing: border-box;
  display: flex;
  align-items: center;
  padding-left: 1px;
}
.logo-arrow {
  width: 0;
  border-left: 3px solid transparent;
  border-right: 3px solid transparent;
  border-top: 4px solid #ddd;
}

/* menu */
.menu {
  height: 21px;
  display: flex;
  align-items: center;
  padding-left: 55px;
  padding-top: 2px;
  box-sizing: border-box;
  background: linear-gradient(#a8a8a8, #656565);
  color: #e4e4e4;
  text-shadow: 0 0 1px #333;
}
.menu-item { flex: none; white-space: nowrap; }

/* toolbar */
.toolbar {
  height: 38px;
  display: flex;
  align-items: center;
  box-sizing: border-box;
  width: 1233px;
  border-bottom: 1px solid #151515;
  border-right: 1px solid #222;
  background: #434343;
  position: relative;
  padding-bottom: 1px;
}
.grip { position: absolute; left: 3px; top: 4px; width: 2px; height: 29px; background: #222; }
.tsep { width: 1px; height: 22px; background: #1e1e1e; flex: none; }
.tbtn { flex: none; height: 28px; display: block; }
.tbtn svg { display: block; }
.tbtn.on {
  background: #3f7fdb;
  outline: 1px solid #1c2d48;
  height: 29px;
}
.dd {
  flex: none;
  height: 18px;
  margin-top: -9px;
  box-sizing: border-box;
  display: flex;
  align-items: center;
  background: linear-gradient(#fbfbfb, #cfcfcf);
  border-top: 2px solid #111;
  border-left: 1px solid #111;
  color: #111;
  font-size: 13px;
  position: relative;
}
.dd-text { font-weight: 400; flex: 1; padding-left: 2px; white-space: nowrap; }
.dd-arrow {
  width: 0;
  margin-right: 3px;
  border-left: 4px solid transparent;
  border-right: 4px solid transparent;
  border-top: 4px solid #111;
}
.dd.dark { background: linear-gradient(90deg, #555 0 88%, #fff 88%); border: 2px solid #fff; border-top-color: #111; }
.dd.dark .dd-arrow { margin-right: 3px; }

/* ribbon */
.rib-tabs {
  height: 21px;
  box-sizing: border-box;
  display: flex;
  align-items: flex-end;
  border-top: 1px solid #666;
  border-bottom: 1px solid #222;
  background: #505050;
  position: relative;
  padding-left: 14px;
}
.rib-active {
  width: 151px;
  height: 17px;
  box-sizing: border-box;
  padding: 1px 0 0 25px;
  background: linear-gradient(#585858, #4b4b4b);
  border: 1px solid #6c6c6c;
  border-bottom: 0;
  color: #c8c8c8;
  line-height: 16px;
  flex: none;
}
.rib-t { color: #8f8f8f; height: 15px; line-height: 14px; flex: none; white-space: nowrap; }
.t1 { margin-left: 28px; width: 48px; }
.t2 { margin-left: 52px; width: 25px; }
.t3 { margin-left: 51px; width: 48px; }
.rib-ic { margin: 0 0 3px 48px; flex: none; }
.rib-panel {
  height: 20px;
  background: linear-gradient(#373737, #434343);
  padding-left: 14px;
  box-sizing: border-box;
  padding-top: 2px;
}
.rib-chip {
  display: block;
  width: 68px;
  height: 17px;
  line-height: 19px;
  text-align: center;
  background: #4f4f4f;
  color: #ddd;
}

/* work */
.work { display: flex; height: 866px; }
.left { width: 1738px; flex: none; }
.viewport {
  height: 821px;
  position: relative;
  box-sizing: border-box;
  background: #3a3838;
  overflow: hidden;
  border: 2px solid #6e6335;
  border-right-width: 3px;
  margin-right: 1px;
  width: 1737px;
}
.scene { position: absolute; left: -2px; top: -2px; }
.vp-label {
  position: absolute;
  z-index: 1;
  left: 4px;
  top: 3px;
  font-size: 12px;
  color: #cfcfcf;
  white-space: pre;
  display: flex;
  align-items: center;
  gap: 5px;
}
.box { width: 3px; height: 7px; border: 1px solid #ccc; }
.slider { height: 17px; display: flex; align-items: stretch; background: #484848; }
.sl-btn { width: 15px; text-align: center; line-height: 19px; color: #aaa; border-right: 1px solid #222; box-sizing: border-box; flex: none; }
.sl-btn.end { width: 17px; border: 1px solid #222; border-width: 0 1px 1px 0; margin-left: 2px; }
.sl-track { width: 125px; text-align: center; line-height: 17px; color: #aaa; background: #525252; border-bottom: 2px solid #111; flex: none; box-sizing: border-box; }
.ruler { height: 28px; }
.ruler svg { display: block; }

/* command panel */
.cmd { width: 182px; flex: none; background: #444; border-left: 0; }
.cmd-tabs { margin: 4px 0 0 0; height: 24px; display: flex; gap: 2px; width: 173px; }
.cmd-tab { width: 27px; height: 24px; flex: none; border-right: 1px solid #2e2e2e; }
.cmd-tab svg { display: block; }
.name-row { margin: 7px 0 0 7px; display: flex; gap: 5px; }
.name {
  width: 145px; height: 18px; box-sizing: border-box;
  background: #555;
  border-top: 2px solid #111; border-left: 1px solid #111;
  padding-left: 2px; line-height: 15px; font-size: 11px; color: #d0d0d0;
}
.swatch { width: 16px; height: 18px; background: #1fb25a; border: 1px solid #222; box-sizing: border-box; }
.modlist {
  margin: 7px 0 0 7px; width: 166px; height: 23px; display: flex; box-sizing: border-box;
  background: #555; border-top: 2px solid #111; border-left: 1px solid #111;
}
.modlist-t { flex: 1; padding-left: 3px; line-height: 20px; color: #d4d4d4; font-size: 12px; }
.modlist-btn { width: 17px; background: #fff; position: relative; }
.modlist-btn::after {
  content: ""; display: block; width: 0; margin: 8px auto 0;
  border-left: 4px solid transparent; border-right: 4px solid transparent; border-top: 4px solid #111;
}
.modgrid { margin: 7px 0 0 5px; display: grid; grid-template-columns: 82px 82px; gap: 3px; grid-auto-rows: 20px; }
.modbtn {
  box-sizing: border-box;
  border: 1px solid #3a3a3a; border-right-color: #222; border-bottom-color: #222;
  background: #484848; text-align: center; line-height: 20px; color: #c8c8c8;
  white-space: nowrap; overflow: hidden; font-size: 12px;
}
.modbtn.dim { color: #0e0e0e; }
.modbtn.mid { color: #b4b4b4; }
.modbtn.tight { font-size: 10.500px; letter-spacing: -.2px; text-align: center; }
.stack { margin: 8px 0 0 8px; width: 163px; height: 125px; box-sizing: border-box; border: 2px solid #f2f2f2; background: #575757; }
.stack-on { height: 17px; background: #3f7fdb; color: #fff; display: flex; align-items: center; padding-left: 8px; }
.stack-on span { margin-left: 23px; }
.stack-base { height: 15px; line-height: 13px; font-size: 11px; padding-left: 21px; border-bottom: 1px solid #7a7a7a; color: #d2d2d2; }
.stack-tools { margin: 6px 0 0 12px; height: 21px; }
.stack-tools svg { display: block; }
.cmd-line { margin: 13px 0 0 4px; width: 173px; height: 2px; background: #111; }
.rollbox { margin: 7px 0 0 2px; width: 175px; height: 498px; border: 1px solid #2d2d2d; box-sizing: border-box; padding: 12px 0 0 3px; }
.rollout { width: 163px; height: 296px; box-sizing: border-box; border: 1px solid #222; }
.roll-head {
  margin: -9px 3px 0 2px; height: 15px; border: 1px solid #777; background: #484848;
  box-sizing: border-box; display: flex; align-items: center; position: relative; justify-content: center; padding-top: 2px;
}
.roll-minus { position: absolute; left: 4px; top: 0; color: #ddd; }
.roll-title { color: #ddd; }
.spin-row { display: flex; align-items: center; margin-top: 11px; height: 15px; }
.spin-row.s2 { margin-top: 4px; }
.spin-l { width: 71px; text-align: right; flex: none; }
.spin-in {
  width: 55px; height: 15px; box-sizing: border-box; margin-left: 4px;
  background: #585858; border-top: 2px solid #111; border-left: 1px solid #111;
  color: #d0d0d0; font-size: 11px; line-height: 12px; padding-left: 3px; flex: none;
}
.spin-b {
  width: 9px; height: 15px; margin-left: 3px; flex: none; box-sizing: border-box;
  background: linear-gradient(#888 0 2px, #ddd 2px 4px, #555 4px 7px, #333 7px 8px, #555 8px 11px, #ddd 11px 13px, #888 13px);
  border: 1px solid #333;
}
.group { margin: 9px 0 0 4px; width: 155px; box-sizing: border-box; border: 1px solid #1f1f1f; }
.g1 { height: 68px; }
.g2 { height: 65px; margin-top: 10px; }
.legend { display: block; width: fit-content; margin: -7px 0 0 6px; padding: 0 2px; background: #444; height: 14px; line-height: 14px; }
.chk, .rad { display: flex; align-items: center; white-space: nowrap; }
.cb {
  width: 11px; height: 11px; box-sizing: border-box; flex: none;
  background: #5e5e5e; border-top: 2px solid #1d1d1d; border-left: 2px solid #1d1d1d; position: relative;
}
.cb.on::after {
  content: ""; display: block; position: absolute; left: 2px; top: -1px; width: 3px; height: 7px;
  border: solid #fff; border-width: 0 2px 2px 0; transform: rotate(40deg);
}
.rb { width: 10px; height: 10px; border-radius: 50%; background: #333; box-shadow: inset 0 0 0 2px #222, 1px 1px 0 #666; flex: none; position: relative; }
.rb:not(.on) { background: #555; }
.rb.on::after { content: ""; display: block; position: absolute; left: 2px; top: 2px; width: 6px; height: 6px; border-radius: 50%; background: #f2f2f2; }
.chk .cb { margin-right: 7px; }
.c1 { margin: 3px 0 0 46px; height: 18px; }
.c2 { margin-left: 46px; height: 18px; }
.radios { display: flex; margin-top: 2px; height: 18px; }
.rad .rb { margin-right: 7px; }
.r1 { margin-left: 25px; }
.r2 { margin-left: 27px; }
.g2 .r3 { margin-left: 43px; height: 18px; }
.g2 .legend + .r3 { margin-top: 1px; }
.r3.small { font-size: 10px; color: #b0b0b0; }
.opts { margin: 5px 0 0 8px; }
.chk.o { height: 16px; }
.chk.o.tall { margin-top: 1px; }
.chk.o.tall.last { margin-top: 2px; }
.chk.sub { margin-left: 17px; }

/* status */
.status { height: 47px; display: flex; position: relative; }
.script {
  width: 105px; flex: none; box-sizing: border-box; padding: 2px 0 0 2px;
  border-right: 1px solid #222;
}
.pink { width: 96px; height: 21px; background: #e0c5c7; border: 1px solid #ddd; box-sizing: border-box; }
.mxs {
  display: block; width: 96px; height: 21px; margin-top: 3px; background: #fff; color: #111;
  font: 10px/19px "Liberation Mono", monospace; padding-left: 3px; box-sizing: border-box; white-space: pre;
  letter-spacing: -.1px;
}
.st-mid { width: 1352px; flex: none; padding-left: 2px; box-sizing: border-box; padding-top: 4px; }
.st-row { display: flex; align-items: center; height: 21px; }
.st-row.two { margin-top: 4px; height: 18px; }
.st-box { flex: none; box-sizing: border-box; background: #4a4a4a; border-top: 1px solid #222; padding-left: 5px; white-space: nowrap; color: #c8c8c8; }
.wide { width: 949px; height: 21px; line-height: 22px; }
.lock { margin-left: 8px; flex: none; }
.cross { margin-left: 14px; flex: none; }
.xyz { flex: none; width: 11px; color: #aaa; font-size: 11px; }
.xyz.x { margin-left: 10px; }
.xyz.y { margin-left: 16px; }
.xyz.z { margin-left: 15px; }
.xyz-in { width: 55px; height: 20px; background: #585858; border-top: 2px solid #111; border-left: 1px solid #111; box-sizing: border-box; flex: none; }
.grid { margin-left: 16px; width: 99px; height: 21px; line-height: 21px; }
.prompt { width: 1225px; height: 18px; line-height: 21px; }
.blue-ic { width: 21px; height: 18px; margin-left: 1px; flex: none; background: #3f7fdb; display: flex; align-items: center; justify-content: center; }
.time { margin-left: 4px; width: 99px; height: 18px; line-height: 21px; }
.st-key { width: 47px; flex: none; box-sizing: border-box; padding: 21px 0 0 13px; }
.st-key svg { display: block; }
.st-anim { width: 194px; flex: none; position: relative; }
.anim-white { height: 1px; width: 117px; background: #ddd; margin: 21px 0 3px 67px; }
.anim-row { display: flex; align-items: flex-start; }
.anim-btn { flex: none; box-sizing: border-box; height: 22px; background: #4e4e4e; line-height: 23px; white-space: nowrap; text-align: center; color: #ccc; }
.setkey { width: 63px; }
.curve-ic { margin: 3px 0 0 6px; flex: none; }
.filter { margin-left: 7px; width: 94px; }
.st-play { width: 127px; flex: none; display: flex; align-items: center; height: 19px; margin-top: 27px; }
.goto { flex: none; margin-left: 1px; }
.frame { width: 62px; height: 19px; box-sizing: border-box; margin-left: 10px; background: #5a5a5a; border-top: 2px solid #111; border-left: 1px solid #111; line-height: 17px; font-size: 11px; padding-left: 4px; flex: none; }
.spin-b.big { height: 19px; margin-left: 2px; }
.tc { margin-left: 7px; flex: none; }
.st-nav { flex: none; margin-top: 6px; width: 92px; margin-left: 1px; }
.st-nav svg { display: block; }

/* watermark */
.mark {
  position: absolute;
  left: 1474px;
  top: 852px;
  width: 340px;
  height: 160px;
  box-sizing: border-box;
  padding: 42px 0 0 26px;
  background: #1f2f5c;
  display: flex;
  z-index: 3;
}
.mark > svg { flex: none; }
.ear { position: absolute; top: -19px; width: 26px; height: 19px; border-radius: 50% 50% 0 0 / 100% 100% 0 0; background: #cfcfcf; }
.e1 { left: 143px; }
.e2 { left: 171px; width: 27px; }
.mark-t { margin: -2px 0 0 24px; display: flex; flex-direction: column; color: #d0d0d0; }
.mark-t b { font: 700 44px/48px "Noto Sans CJK SC", sans-serif; letter-spacing: 7px; white-space: nowrap; }
.mark-t span { font: 600 17px/20px "Open Sans", sans-serif; letter-spacing: 4.300px; margin-top: 4px; white-space: nowrap; color: #b9bccb; }
</style>
